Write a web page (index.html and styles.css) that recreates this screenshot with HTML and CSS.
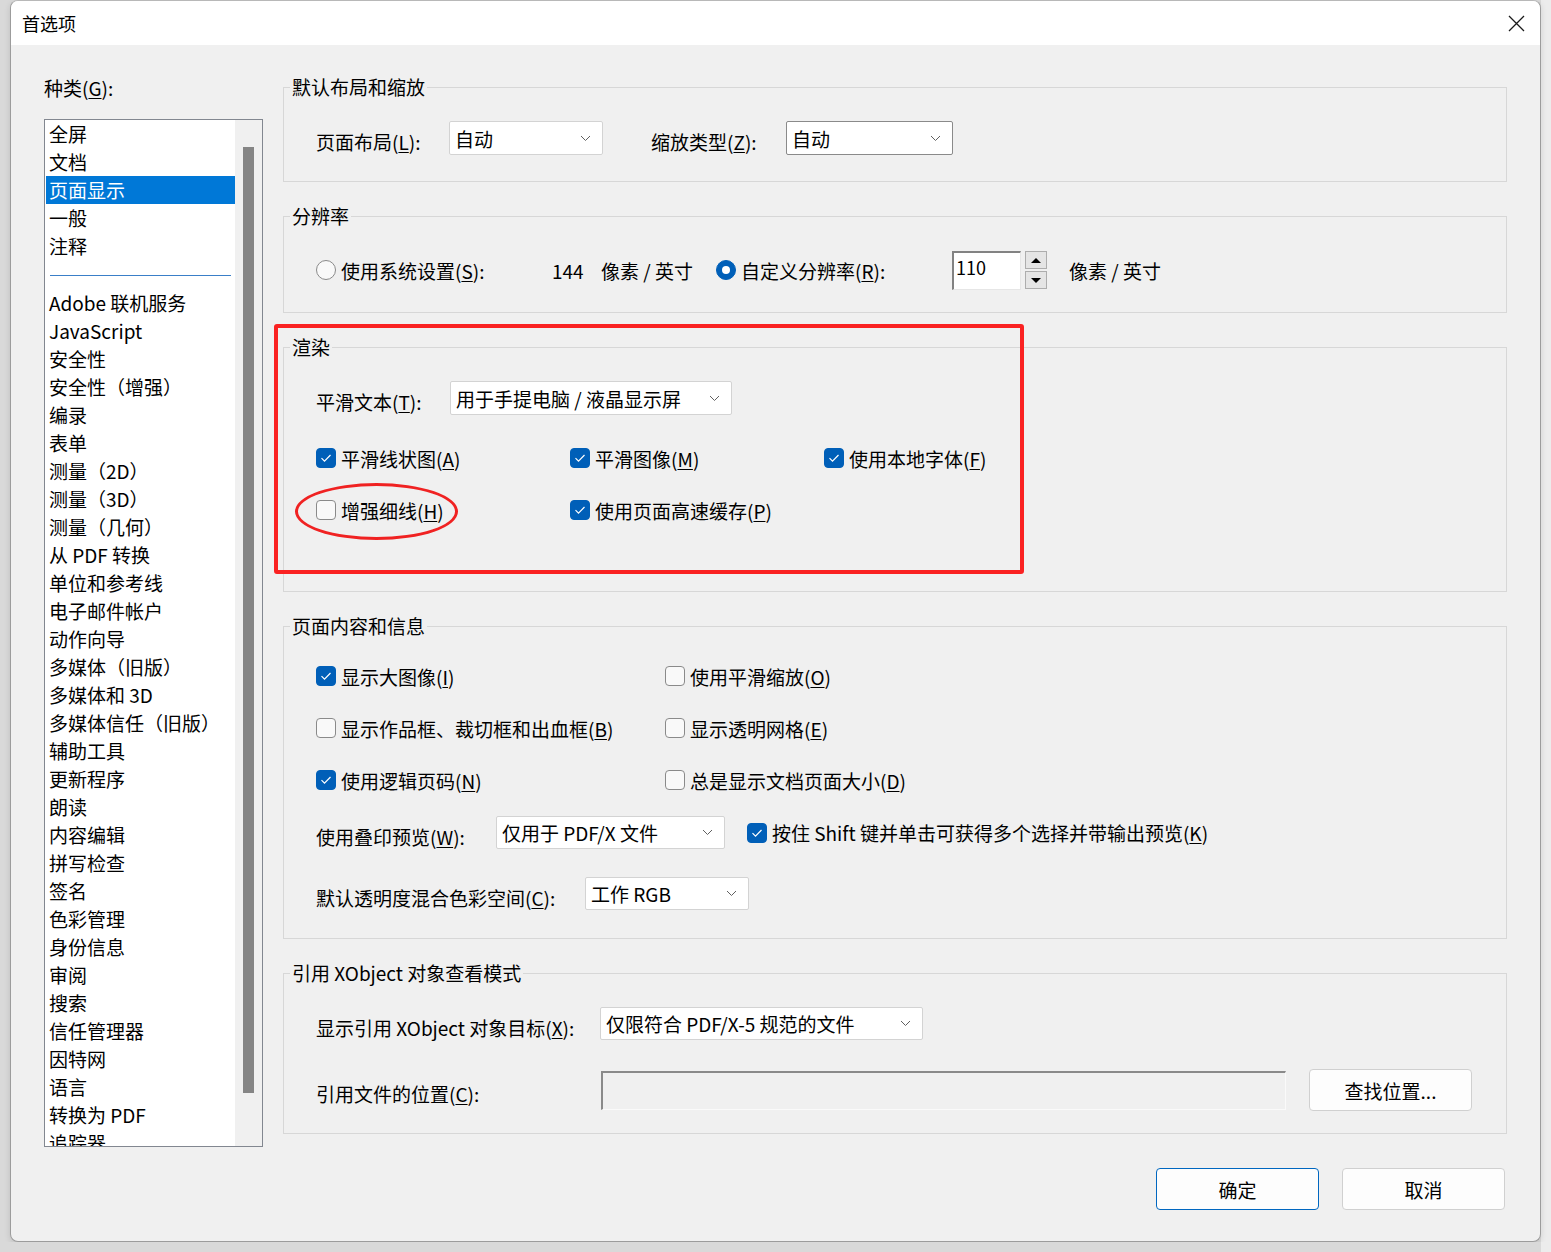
FILE: index.html
```html
<!DOCTYPE html>
<html lang="zh-CN">
<head>
    <meta charset="UTF-8">
    <meta name="viewport" content="width=device-width, initial-scale=1.0">
    <title>首选项</title>
    <link rel="stylesheet" href="styles.css">
</head>
<body>
    <div class="window">
        <div class="titlebar">
            <span class="title">首选项</span>
            <button class="close" title="关闭">
                <svg width="17" height="17" viewBox="0 0 17 17"><path d="M1 1L16 16M16 1L1 16" stroke="#1a1a1a" stroke-width="1.3" fill="none"/></svg>
            </button>
        </div>

        <div class="content">
            <div class="main">
                <!-- category list -->
                <div class="side">
                    <div class="side-label">种类(<u>G</u>):</div>
                    <div class="listbox">
                        <ul class="list">
                            <li>全屏</li>
                            <li>文档</li>
                            <li class="sel">页面显示</li>
                            <li>一般</li>
                            <li>注释</li>
                            <li class="sep"></li>
                            <li>Adobe 联机服务</li>
                            <li>JavaScript</li>
                            <li>安全性</li>
                            <li>安全性（增强）</li>
                            <li>编录</li>
                            <li>表单</li>
                            <li>测量（2D）</li>
                            <li>测量（3D）</li>
                            <li>测量（几何）</li>
                            <li>从 PDF 转换</li>
                            <li>单位和参考线</li>
                            <li>电子邮件帐户</li>
                            <li>动作向导</li>
                            <li>多媒体（旧版）</li>
                            <li>多媒体和 3D</li>
                            <li>多媒体信任（旧版）</li>
                            <li>辅助工具</li>
                            <li>更新程序</li>
                            <li>朗读</li>
                            <li>内容编辑</li>
                            <li>拼写检查</li>
                            <li>签名</li>
                            <li>色彩管理</li>
                            <li>身份信息</li>
                            <li>审阅</li>
                            <li>搜索</li>
                            <li>信任管理器</li>
                            <li>因特网</li>
                            <li>语言</li>
                            <li>转换为 PDF</li>
                            <li>追踪器</li>
                        </ul>
                        <div class="scrollbar"><div class="thumb"></div></div>
                    </div>
                </div>

                <!-- settings -->
                <div class="panel">
                    <fieldset class="group g-layout">
                        <legend>默认布局和缩放</legend>
                        <div class="row row-sel">
                            <span class="lbl w133">页面布局(<u>L</u>):</span>
                            <div class="select w154"><span>自动</span><svg class="chev" width="11" height="7" viewBox="0 0 11 7"><path d="M1 1l4.5 4.5L10 1" stroke="#606060" fill="none"/></svg></div>
                            <span class="lbl w135 ml48">缩放类型(<u>Z</u>):</span>
                            <div class="select focus w167"><span>自动</span><svg class="chev" width="11" height="7" viewBox="0 0 11 7"><path d="M1 1l4.5 4.5L10 1" stroke="#606060" fill="none"/></svg></div>
                        </div>
                    </fieldset>

                    <fieldset class="group g-res">
                        <legend>分辨率</legend>
                        <div class="row row-res">
                            <span class="radio"></span>
                            <span class="w211">使用系统设置(<u>S</u>):</span>
                            <span class="w49">144</span>
                            <span class="w115">像素 / 英寸</span>
                            <span class="radio on"></span>
                            <span class="w211">自定义分辨率(<u>R</u>):</span>
                            <div class="num">110</div>
                            <div class="spin">
                                <span class="spin-btn up"></span>
                                <span class="spin-btn down"></span>
                            </div>
                            <span>像素 / 英寸</span>
                        </div>
                    </fieldset>

                    <fieldset class="group g-render">
                        <legend>渲染</legend>
                        <div class="row row-sel">
                            <span class="lbl w134">平滑文本(<u>T</u>):</span>
                            <div class="select w282"><span>用于手提电脑 / 液晶显示屏</span><svg class="chev" width="11" height="7" viewBox="0 0 11 7"><path d="M1 1l4.5 4.5L10 1" stroke="#606060" fill="none"/></svg></div>
                        </div>
                        <div class="row row-cb first">
                            <div class="cell w254"><span class="cb on"><svg width="12" height="10" viewBox="0 0 12 10"><path d="M1.5 5.2l3 3 6-6.2" stroke="#fff" stroke-width="1.2" fill="none"/></svg></span>平滑线状图(<u>A</u>)</div>
                            <div class="cell w254"><span class="cb on"><svg width="12" height="10" viewBox="0 0 12 10"><path d="M1.5 5.2l3 3 6-6.2" stroke="#fff" stroke-width="1.2" fill="none"/></svg></span>平滑图像(<u>M</u>)</div>
                            <div class="cell"><span class="cb on"><svg width="12" height="10" viewBox="0 0 12 10"><path d="M1.5 5.2l3 3 6-6.2" stroke="#fff" stroke-width="1.2" fill="none"/></svg></span>使用本地字体(<u>F</u>)</div>
                        </div>
                        <div class="row row-cb">
                            <div class="cell w254"><span class="cb"></span>增强细线(<u>H</u>)</div>
                            <div class="cell"><span class="cb on"><svg width="12" height="10" viewBox="0 0 12 10"><path d="M1.5 5.2l3 3 6-6.2" stroke="#fff" stroke-width="1.2" fill="none"/></svg></span>使用页面高速缓存(<u>P</u>)</div>
                        </div>
                    </fieldset>

                    <fieldset class="group g-content">
                        <legend>页面内容和信息</legend>
                        <div class="row row-cb">
                            <div class="cell w349"><span class="cb on"><svg width="12" height="10" viewBox="0 0 12 10"><path d="M1.5 5.2l3 3 6-6.2" stroke="#fff" stroke-width="1.2" fill="none"/></svg></span>显示大图像(<u>I</u>)</div>
                            <div class="cell"><span class="cb"></span>使用平滑缩放(<u>O</u>)</div>
                        </div>
                        <div class="row row-cb">
                            <div class="cell w349"><span class="cb"></span>显示作品框、裁切框和出血框(<u>B</u>)</div>
                            <div class="cell"><span class="cb"></span>显示透明网格(<u>E</u>)</div>
                        </div>
                        <div class="row row-cb">
                            <div class="cell w349"><span class="cb on"><svg width="12" height="10" viewBox="0 0 12 10"><path d="M1.5 5.2l3 3 6-6.2" stroke="#fff" stroke-width="1.2" fill="none"/></svg></span>使用逻辑页码(<u>N</u>)</div>
                            <div class="cell"><span class="cb"></span>总是显示文档页面大小(<u>D</u>)</div>
                        </div>
                        <div class="row row-sel overprint">
                            <span class="lbl w180">使用叠印预览(<u>W</u>):</span>
                            <div class="select w229"><span>仅用于 PDF/X 文件</span><svg class="chev" width="11" height="7" viewBox="0 0 11 7"><path d="M1 1l4.5 4.5L10 1" stroke="#606060" fill="none"/></svg></div>
                            <div class="cell ml22"><span class="cb on"><svg width="12" height="10" viewBox="0 0 12 10"><path d="M1.5 5.2l3 3 6-6.2" stroke="#fff" stroke-width="1.2" fill="none"/></svg></span>按住 Shift 键并单击可获得多个选择并带输出预览(<u>K</u>)</div>
                        </div>
                        <div class="row row-sel blend">
                            <span class="lbl w269">默认透明度混合色彩空间(<u>C</u>):</span>
                            <div class="select w164"><span>工作 RGB</span><svg class="chev" width="11" height="7" viewBox="0 0 11 7"><path d="M1 1l4.5 4.5L10 1" stroke="#606060" fill="none"/></svg></div>
                        </div>
                    </fieldset>

                    <fieldset class="group g-xobj">
                        <legend>引用 XObject 对象查看模式</legend>
                        <div class="row row-sel">
                            <span class="lbl w284">显示引用 XObject 对象目标(<u>X</u>):</span>
                            <div class="select w323"><span>仅限符合 PDF/X-5 规范的文件</span><svg class="chev" width="11" height="7" viewBox="0 0 11 7"><path d="M1 1l4.5 4.5L10 1" stroke="#606060" fill="none"/></svg></div>
                        </div>
                        <div class="row row-path">
                            <span class="lbl w285">引用文件的位置(<u>C</u>):</span>
                            <div class="path"></div>
                            <button class="btn ml23">查找位置...</button>
                        </div>
                    </fieldset>
                </div>
            </div>

            <div class="footer">
                <button class="btn primary">确定</button>
                <button class="btn">取消</button>
            </div>
        </div>

        <!-- red review marks -->
        <div class="mark-box"></div>
        <div class="mark-ring"></div>
    </div>
</body>
</html>
```

FILE: styles.css
```css
body {
    margin: 0;
    background: linear-gradient(to right, #d9d9d9 1541px, #ececec 1541px);
    font-family: "Noto Sans CJK SC", "Noto Sans", sans-serif;
    font-size: 19px;
    color: #000;
}
u {
    text-underline-offset: 2px;
}
.window {
    position: relative;
    width: 1531px;
    height: 1242px;
    margin-left: 10px;
    box-sizing: border-box;
    border: 1px solid #9c9c9c;
    border-top-color: #b8b8b8;
    border-radius: 8px;
    background: #f0f0f0;
    overflow: hidden;
    display: flex;
    flex-direction: column;
    box-shadow: 0 2px 6px rgba(0, 0, 0, 0.12);
}
.titlebar {
    height: 44px;
    flex-shrink: 0;
    background: #fff;
    display: flex;
    align-items: center;
    justify-content: space-between;
    padding: 0 15px 0 11px;
}
.title {
    font-size: 18px;
}
.close {
    border: none;
    background: none;
    padding: 0;
    width: 17px;
    height: 17px;
    display: flex;
}
.content {
    flex: 1;
    display: flex;
    flex-direction: column;
    padding: 30px 33px 0 33px;
}
.main {
    display: flex;
    gap: 20px;
}

/* left list */
.side {
    width: 219px;
    flex-shrink: 0;
}
.side-label {
    line-height: 26px;
    margin-bottom: 18px;
}
.listbox {
    height: 1028px;
    box-sizing: border-box;
    border: 1px solid #828790;
    background: #fff;
    display: flex;
}
.list {
    flex: 1;
    list-style: none;
    margin: 0;
    padding: 0 0 0 1px;
    overflow: hidden;
}
.list li {
    height: 28px;
    line-height: 28px;
    padding-left: 3px;
    white-space: nowrap;
}
.list li.sel {
    background: #0078d7;
    color: #fff;
}
.list li.sep {
    height: 29px;
    box-sizing: border-box;
    padding-top: 15px;
}
.list li.sep::before {
    content: "";
    display: block;
    margin: 0 4px 0 1px;
    border-top: 1px solid #3a7fc8;
}
.scrollbar {
    width: 27px;
    box-sizing: border-box;
    padding: 27px 0 0 8px;
    background: #f0f0f0;
}
.thumb {
    width: 11px;
    height: 946px;
    background: #858585;
}

/* right groups */
.panel {
    width: 1224px;
    display: flex;
    flex-direction: column;
    gap: 22px;
}
.group {
    margin: 0;
    padding: 22px 0 0 32px;
    border: 1px solid #d7d7d7;
    box-sizing: border-box;
    min-width: 0;
}
.group legend {
    padding: 0 2px;
    margin-left: -26px;
    line-height: 24px;
}
.g-layout { height: 107px; }
.g-res { height: 109px; }
.g-render { height: 257px; }
.g-content { height: 325px; padding-top: 12px; }
.g-xobj { height: 173px; }

.row {
    display: flex;
    align-items: center;
    white-space: nowrap;
}
.row-sel { height: 34px; }
.row-res { height: 40px; }
.row-cb { height: 52px; }
.row-cb.first { margin-top: 17px; }
.overprint { height: 33px; margin-top: 10px; }
.blend { height: 33px; margin-top: 28px; }
.g-xobj .row-sel { height: 33px; }
.row-path { height: 42px; margin-top: 29px; }

.lbl {
    padding-top: 7px;
    flex-shrink: 0;
}
.cell {
    display: flex;
    align-items: center;
    flex-shrink: 0;
}
.w49 { width: 49px; }
.w115 { width: 115px; }
.w133 { width: 133px; }
.w134 { width: 134px; }
.w135 { width: 135px; }
.w154 { width: 154px; }
.w164 { width: 164px; }
.w167 { width: 167px; }
.w180 { width: 180px; }
.w211 { width: 211px; flex-shrink: 0; }
.w229 { width: 229px; }
.w254 { width: 254px; }
.w269 { width: 269px; }
.w282 { width: 282px; }
.w284 { width: 284px; }
.w285 { width: 285px; }
.w323 { width: 323px; }
.w349 { width: 349px; }
.ml22 { margin-left: 22px; }
.ml23 { margin-left: 23px; }
.ml48 { margin-left: 48px; }

.select {
    box-sizing: border-box;
    height: 100%;
    flex-shrink: 0;
    background: #fff;
    border: 1px solid #d3d3d3;
    border-radius: 2px;
    display: flex;
    align-items: center;
    justify-content: space-between;
    padding: 0 11px 0 5px;
    line-height: 1;
}
.select.focus {
    border-color: #8a8a8a;
}
.chev {
    flex-shrink: 0;
}

.cb {
    width: 20px;
    height: 20px;
    box-sizing: border-box;
    border: 1px solid #8a8a8a;
    border-radius: 4px;
    background: #f9f9f9;
    margin-right: 5px;
    flex-shrink: 0;
    display: flex;
    align-items: center;
    justify-content: center;
}
.cb.on {
    background: #005fb8;
    border-color: #005fb8;
}
.radio {
    width: 20px;
    height: 20px;
    box-sizing: border-box;
    border: 1px solid #8a8a8a;
    border-radius: 50%;
    background: #f9f9f9;
    margin-right: 5px;
    flex-shrink: 0;
    display: flex;
    align-items: center;
    justify-content: center;
}
.radio.on {
    background: #005fb8;
    border-color: #005fb8;
}
.radio.on::after {
    content: "";
    width: 8px;
    height: 8px;
    border-radius: 50%;
    background: #fff;
}

.num {
    width: 69px;
    height: 39px;
    box-sizing: border-box;
    flex-shrink: 0;
    background: #fff;
    border: 1px solid #e6e6e6;
    border-top: 2px solid #828282;
    border-left: 2px solid #828282;
    padding: 4px 2px;
    font-size: 18px;
    line-height: 20px;
}
.spin {
    display: flex;
    flex-direction: column;
    gap: 2px;
    margin: 0 22px 0 4px;
}
.spin-btn {
    width: 22px;
    height: 18px;
    box-sizing: border-box;
    border: 1px solid #adadad;
    background: #e5e5e5;
    display: flex;
    align-items: center;
    justify-content: center;
}
.spin-btn.up::after {
    content: "";
    border-left: 5px solid transparent;
    border-right: 5px solid transparent;
    border-bottom: 5px solid #000;
}
.spin-btn.down::after {
    content: "";
    border-left: 5px solid transparent;
    border-right: 5px solid transparent;
    border-top: 5px solid #000;
}
.path {
    width: 685px;
    height: 39px;
    box-sizing: border-box;
    flex-shrink: 0;
    background: #f0f0f0;
    border: 1px solid #fafafa;
    border-top: 2px solid #8a8a8a;
    border-left: 2px solid #8a8a8a;
}

.btn {
    width: 163px;
    height: 42px;
    box-sizing: border-box;
    flex-shrink: 0;
    background: #fdfdfd;
    border: 1px solid #d0d0d0;
    border-radius: 4px;
    font: inherit;
    color: #000;
    padding: 0;
}
.btn.primary {
    border-color: #0067c0;
}
.footer {
    display: flex;
    justify-content: flex-end;
    gap: 23px;
    margin-top: 21px;
    padding-right: 2px;
}

/* annotation marks drawn over the dialog */
.mark-box {
    position: absolute;
    left: 263px;
    top: 323px;
    width: 750px;
    height: 250px;
    box-sizing: border-box;
    border: 4px solid #fa2222;
    border-radius: 3px;
}
.mark-ring {
    position: absolute;
    left: 284px;
    top: 482px;
    width: 163px;
    height: 57px;
    box-sizing: border-box;
    border: 3px solid #f02222;
    border-radius: 50%;
}
```
